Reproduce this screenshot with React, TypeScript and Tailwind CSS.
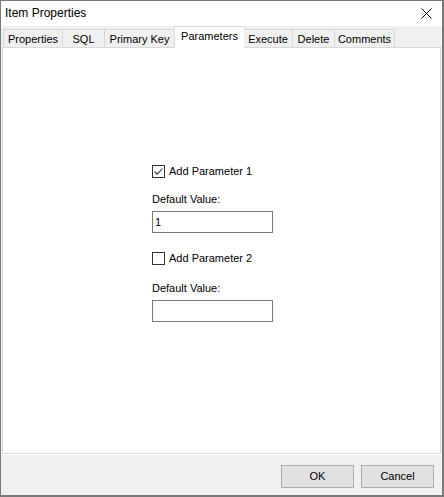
import React from "react";

const font = { fontFamily: '"Liberation Sans", Arial, sans-serif' };

function CheckBox({ checked }: { checked: boolean }) {
  return (
    <div className="w-[13px] h-[13px] border border-[#333333] bg-white flex items-center justify-center shrink-0">
      {checked && (
        <svg width="11" height="11" viewBox="0 0 11 11">
          <path d="M1.5 5.5 L4.2 8.2 L9.5 2.5" fill="none" stroke="#333333" strokeWidth="1.1" />
        </svg>
      )}
    </div>
  );
}

export default function App() {
  const tabs = ["Properties", "SQL", "Primary Key", "Parameters", "Execute", "Delete", "Comments"];
  const widths = [60, 42, 70, 69, 49, 42, 60];
  return (
    <div
      className="w-[444px] h-[497px] bg-[#f0f0f0] border-l border-t border-r-2 border-b-2 border-[#7a7a7a] flex flex-col text-black overflow-hidden"
      style={font}
    >
      {/* Title bar */}
      <div className="h-[25px] bg-white flex items-center justify-between pl-[4px] pr-[10px] shrink-0">
        <span className="text-[12px] leading-[15px]">Item Properties</span>
        <svg width="11" height="11" viewBox="0 0 11 11">
          <path d="M0.5 0.5 L10.5 10.5 M10.5 0.5 L0.5 10.5" stroke="#000" strokeWidth="1" />
        </svg>
      </div>

      {/* Tabs */}
      <div className="flex items-end pl-[2px] pt-[1px] h-[22px] shrink-0 relative z-10">
        {tabs.map((t, i) => {
          const active = t === "Parameters";
          return (
            <div
              key={t}
              className={
                active
                  ? "h-[22px] bg-white border border-b-0 border-[#d9d9d9] flex items-start justify-center pt-[3px] text-[11px] leading-[13px] -mx-[1px]"
                  : "h-[19px] bg-[#f0f0f0] border border-[#d9d9d9] border-l-0 first:border-l flex items-start justify-center pt-[3px] text-[11px] leading-[13px]"
              }
              style={{ width: widths[i] + (active ? 2 : 0) }}
            >
              {t}
            </div>
          );
        })}
      </div>

      {/* Panel */}
      <div className="mx-[1px] h-[407px] bg-white border border-[#d9d9d9] -mt-[1px] shrink-0">
        <div className="pl-[149px] pt-[117px] flex flex-col text-[11px] leading-[13px]">
          <div className="h-[13px] flex items-center gap-[4px]">
            <CheckBox checked />
            <span>Add Parameter 1</span>
          </div>
          <div className="mt-[15px]">Default Value:</div>
          <div className="mt-[5px] w-[121px] h-[22px] border border-[#7a7a7a] flex items-center pl-[2px]">1</div>
          <div className="mt-[19px] h-[13px] flex items-center gap-[4px]">
            <CheckBox checked={false} />
            <span>Add Parameter 2</span>
          </div>
          <div className="mt-[17px]">Default Value:</div>
          <div className="mt-[5px] w-[121px] h-[22px] border border-[#7a7a7a]" />
        </div>
      </div>
      <div className="h-[1px] bg-white mx-[1px] shrink-0" />

      {/* Buttons */}
      <div className="flex-1 flex justify-end items-start pt-[10px] pr-[8px] gap-[7px]">
        <button className="w-[73px] h-[23px] bg-[#e1e1e1] border border-[#adadad] text-[11px] leading-[13px]">OK</button>
        <button className="w-[73px] h-[23px] bg-[#e1e1e1] border border-[#adadad] text-[11px] leading-[13px]">Cancel</button>
      </div>
    </div>
  );
}
